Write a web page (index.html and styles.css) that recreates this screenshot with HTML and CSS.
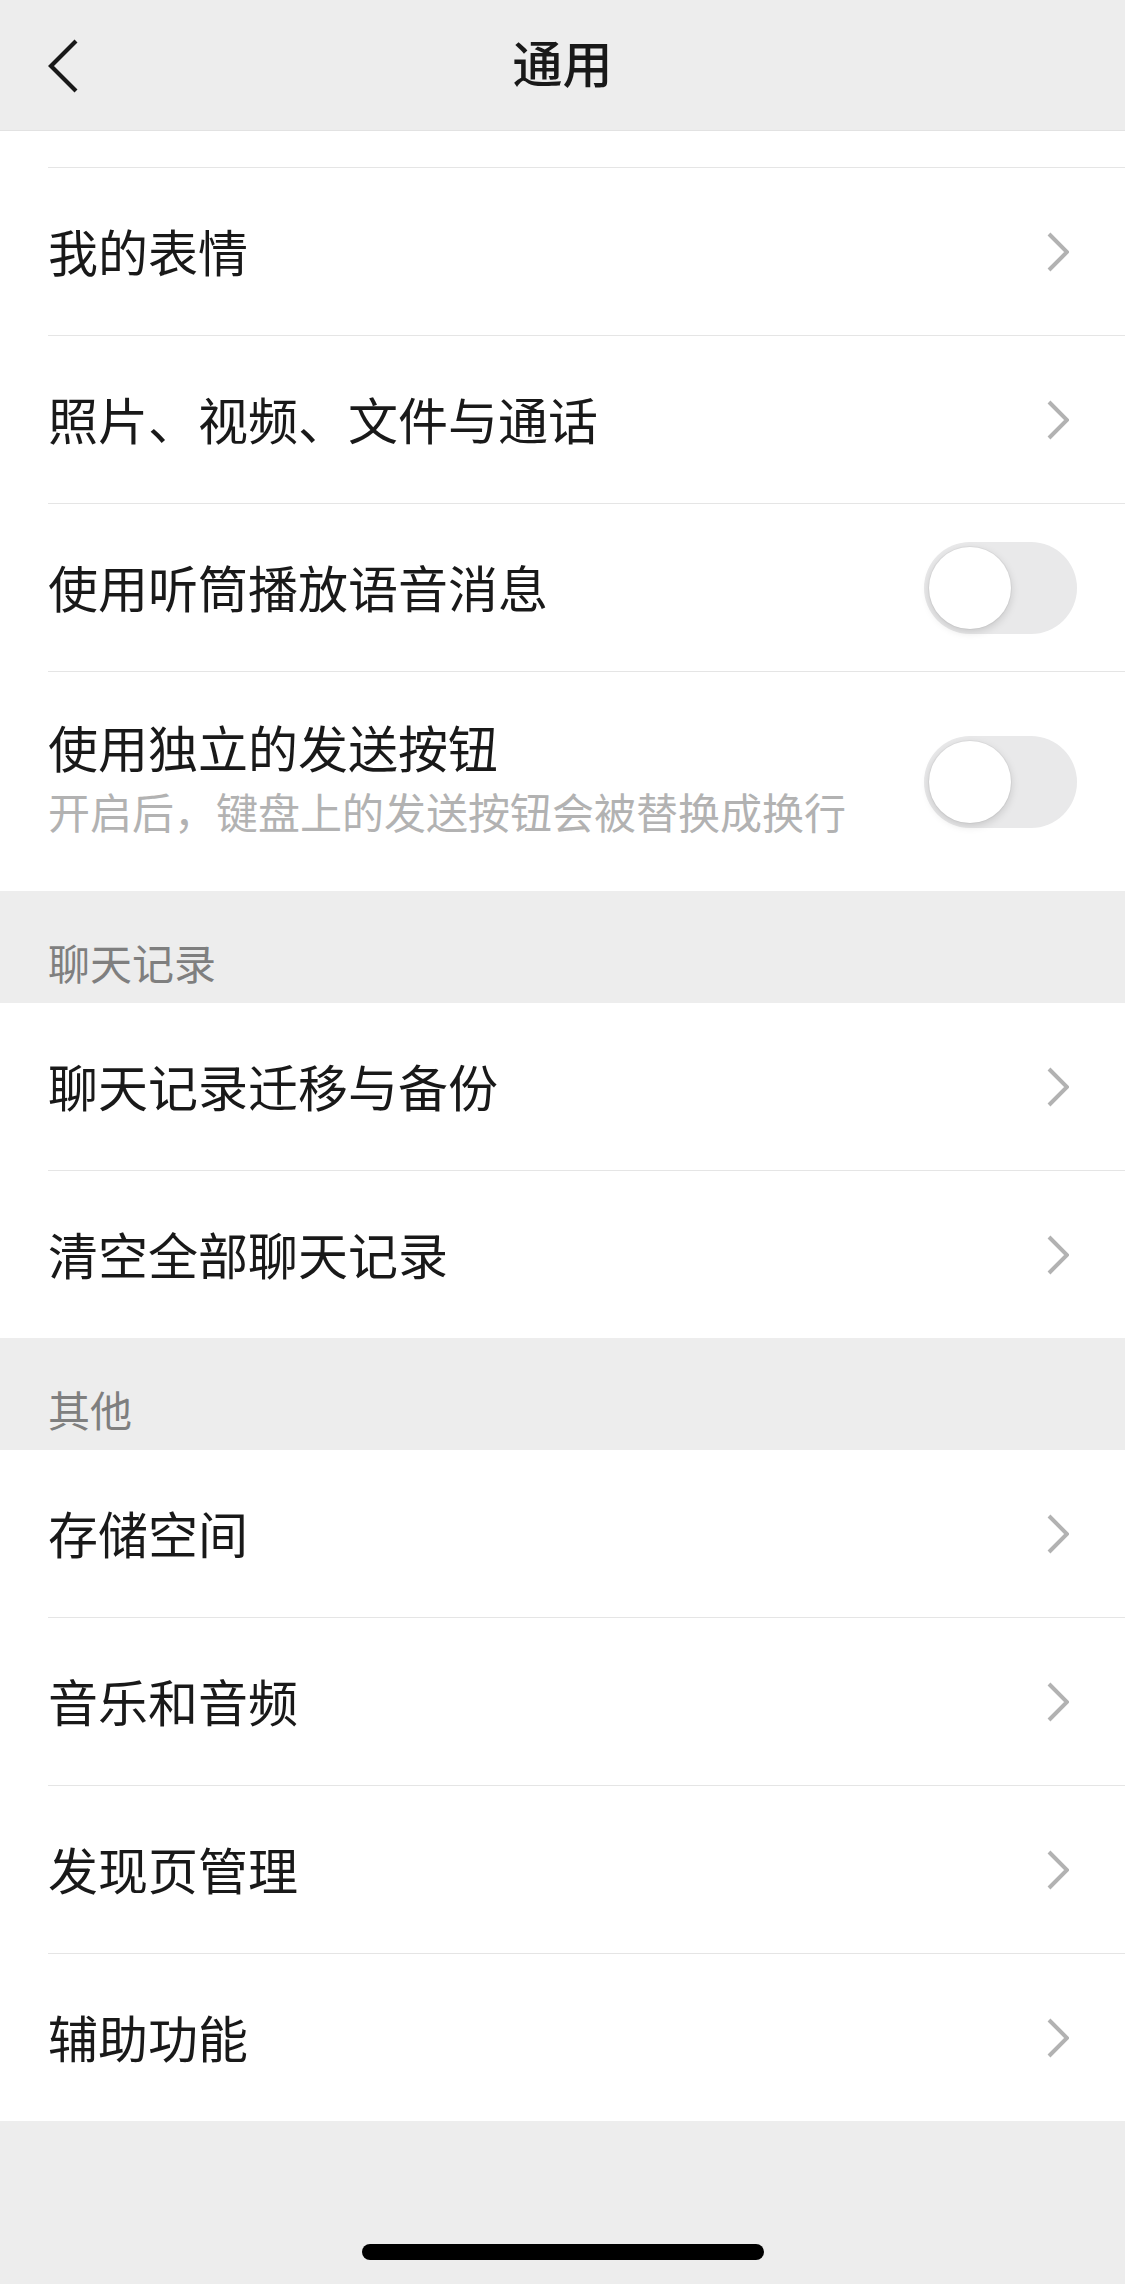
FILE: index.html
```html
<!DOCTYPE html>
<html lang="zh-CN">
<head>
  <meta charset="UTF-8" />
  <meta name="viewport" content="width=device-width, initial-scale=1">
  <title>通用</title>
  <link rel="stylesheet" href="styles.css">
</head>

<body>
  <header class="navbar">
    <span class="back">
      <svg width="32" height="56" viewBox="0 0 32 56"><polyline points="28,3 3,28 28,53" fill="none" stroke="#191919" stroke-width="4.2" /></svg>
    </span>
    <h1>通用</h1>
    <span></span>
  </header>

  <div class="group">
    <div class="cell cell-stub"></div>
    <div class="cell">
      <div class="cell-body">
        <span class="cell-title">我的表情</span>
        <svg class="arrow" width="22" height="40" viewBox="0 0 22 40"><polyline points="2,2 20,20 2,38" fill="none" stroke="#b2b2b2" stroke-width="4" /></svg>
      </div>
    </div>
    <div class="cell">
      <div class="cell-body">
        <span class="cell-title">照片、视频、文件与通话</span>
        <svg class="arrow" width="22" height="40" viewBox="0 0 22 40"><polyline points="2,2 20,20 2,38" fill="none" stroke="#b2b2b2" stroke-width="4" /></svg>
      </div>
    </div>
    <div class="cell">
      <div class="cell-body">
        <span class="cell-title">使用听筒播放语音消息</span>
        <span class="switch"><span class="knob"></span></span>
      </div>
    </div>
    <div class="cell">
      <div class="cell-body cell-tall">
        <div class="cell-text">
          <div class="cell-title">使用独立的发送按钮</div>
          <div class="cell-desc">开启后，键盘上的发送按钮会被替换成换行</div>
        </div>
        <span class="switch"><span class="knob"></span></span>
      </div>
    </div>
  </div>

  <div class="group-title">聊天记录</div>
  <div class="group">
    <div class="cell">
      <div class="cell-body">
        <span class="cell-title">聊天记录迁移与备份</span>
        <svg class="arrow" width="22" height="40" viewBox="0 0 22 40"><polyline points="2,2 20,20 2,38" fill="none" stroke="#b2b2b2" stroke-width="4" /></svg>
      </div>
    </div>
    <div class="cell">
      <div class="cell-body">
        <span class="cell-title">清空全部聊天记录</span>
        <svg class="arrow" width="22" height="40" viewBox="0 0 22 40"><polyline points="2,2 20,20 2,38" fill="none" stroke="#b2b2b2" stroke-width="4" /></svg>
      </div>
    </div>
  </div>

  <div class="group-title">其他</div>
  <div class="group">
    <div class="cell">
      <div class="cell-body">
        <span class="cell-title">存储空间</span>
        <svg class="arrow" width="22" height="40" viewBox="0 0 22 40"><polyline points="2,2 20,20 2,38" fill="none" stroke="#b2b2b2" stroke-width="4" /></svg>
      </div>
    </div>
    <div class="cell">
      <div class="cell-body">
        <span class="cell-title">音乐和音频</span>
        <svg class="arrow" width="22" height="40" viewBox="0 0 22 40"><polyline points="2,2 20,20 2,38" fill="none" stroke="#b2b2b2" stroke-width="4" /></svg>
      </div>
    </div>
    <div class="cell">
      <div class="cell-body">
        <span class="cell-title">发现页管理</span>
        <svg class="arrow" width="22" height="40" viewBox="0 0 22 40"><polyline points="2,2 20,20 2,38" fill="none" stroke="#b2b2b2" stroke-width="4" /></svg>
      </div>
    </div>
    <div class="cell">
      <div class="cell-body">
        <span class="cell-title">辅助功能</span>
        <svg class="arrow" width="22" height="40" viewBox="0 0 22 40"><polyline points="2,2 20,20 2,38" fill="none" stroke="#b2b2b2" stroke-width="4" /></svg>
      </div>
    </div>
  </div>

  <div class="footer">
    <div class="home-bar"></div>
  </div>
</body>
</html>
```

FILE: styles.css
```css
body {
  margin: 0;
  background: #ededed;
  font-family: "Noto Sans CJK SC", "Noto Sans", sans-serif;
  color: #191919;
}

.navbar {
  display: grid;
  grid-template-columns: 1fr auto 1fr;
  align-items: center;
  height: 130px;
  padding: 0 48px;
  background: #ededed;
  border-bottom: 1px solid #e2e2e2;
}

.back svg {
  display: block;
  margin-top: 2px;
}

.navbar h1 {
  margin: -8px 0 0;
  font-size: 50px;
  font-weight: 500;
  line-height: 60px;
}

.group {
  background: #fff;
}

.cell {
  padding-left: 48px;
}

.cell-stub {
  height: 36px;
}

.cell-body {
  display: flex;
  align-items: center;
  justify-content: space-between;
  height: 167px;
  padding-right: 48px;
}

.cell + .cell .cell-body {
  border-top: 1px solid #e5e5e5;
}

.cell-tall {
  height: 219px;
}

.cell-title {
  font-size: 50px;
  line-height: 60px;
  margin-top: -4px;
}

.cell-text {
  align-self: flex-start;
  margin-top: 48px;
}

.cell-desc {
  margin-top: 14px;
  font-size: 42px;
  line-height: 42px;
  color: #b2b2b2;
}

.arrow {
  display: block;
  margin-right: 8px;
}

.switch {
  display: flex;
  align-items: center;
  width: 153px;
  height: 92px;
  padding: 0 5px;
  box-sizing: border-box;
  border-radius: 46px;
  background: #e9e9ea;
}

.knob {
  width: 82px;
  height: 82px;
  border-radius: 50%;
  background: #fff;
  box-shadow: 0 3px 8px rgba(0, 0, 0, 0.15), 0 0 0 1px rgba(0, 0, 0, 0.04);
}

.group-title {
  padding: 50px 48px 20px;
  font-size: 42px;
  line-height: 42px;
  color: #7f7f7f;
}

.footer {
  height: 163px;
  padding-top: 123px;
  box-sizing: border-box;
}

.home-bar {
  width: 402px;
  height: 16px;
  margin: 0 auto;
  border-radius: 8px;
  background: #000;
}
```
